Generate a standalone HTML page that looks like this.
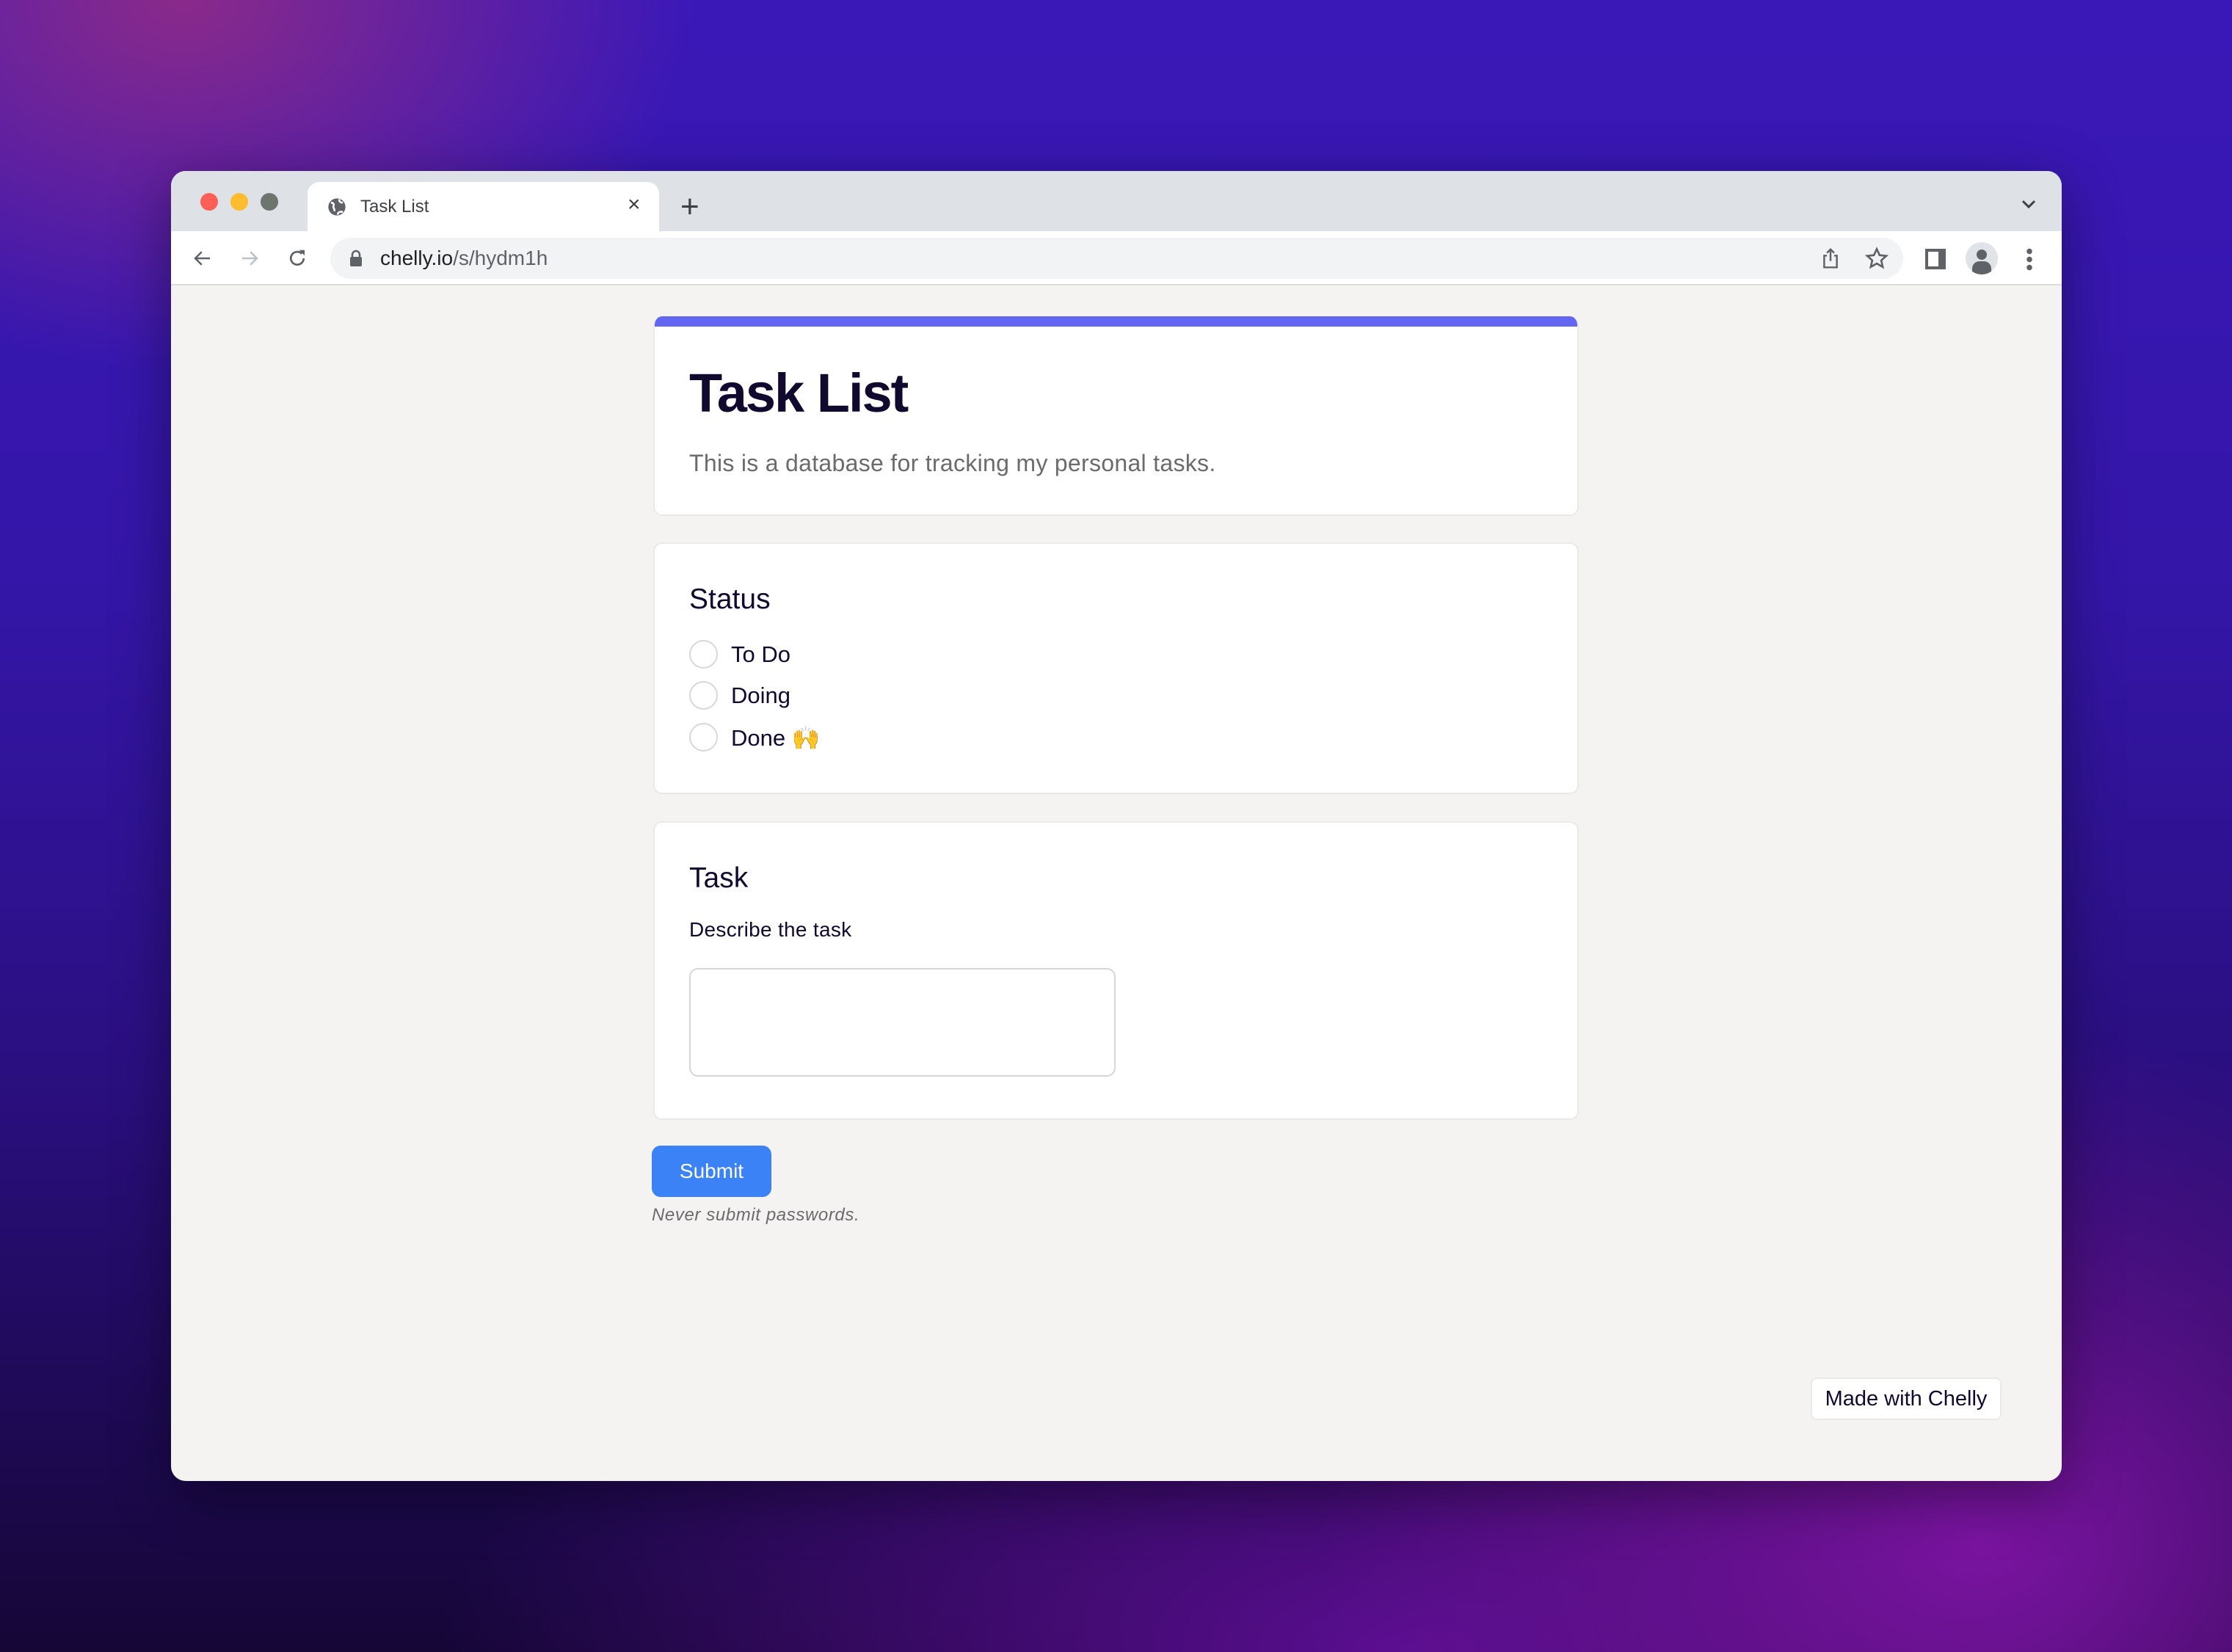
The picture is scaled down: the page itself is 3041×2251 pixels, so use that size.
<!DOCTYPE html>
<html><head><meta charset="utf-8"><style>
*{margin:0;padding:0;box-sizing:border-box}
body{width:3041px;height:2251px;overflow:hidden;position:relative;font-family:"Liberation Sans",sans-serif;
background:
radial-gradient(ellipse 700px 500px at 250px 0px,#8a2a8a 0%,rgba(138,42,138,0) 100%),
radial-gradient(ellipse 900px 700px at 2700px 2100px,#7a14a0 0%,rgba(122,20,160,0) 100%),
radial-gradient(ellipse 1300px 600px at 1900px 2250px,#5a0e90 0%,rgba(90,14,144,0) 100%),
linear-gradient(180deg,#3a18b8 0%,#3416a8 35%,#2a0f80 65%,#150636 100%);}
.win{position:absolute;left:233px;top:233px;width:2576px;height:1785px;border-radius:20px;overflow:hidden;background:#f4f3f2;box-shadow:0 20px 80px rgba(0,0,0,.4)}
.tabs{position:absolute;left:0;top:0;width:100%;height:82px;background:#dee1e6}
.dot{position:absolute;top:30px;width:24px;height:24px;border-radius:50%}
.tab{position:absolute;left:186px;top:15px;width:479px;height:67px;background:#fff;border-radius:16px 16px 0 0}
.tool{position:absolute;left:0;top:82px;width:100%;height:74px;background:#fff;border-bottom:2px solid #dadce0}
.url{position:absolute;left:217px;top:9px;width:2143px;height:56px;border-radius:28px;background:#f1f3f4}
.card{position:absolute;left:657px;width:1261px;background:#fff;border:2px solid #ebe9e6;border-radius:12px}
.h2{position:absolute;left:47px;font-size:39px;color:#120a2e}
.radio{position:absolute;left:47px;width:39px;height:39px;border:2px solid #d8d8dc;border-radius:50%}
.rl{position:absolute;left:104px;font-size:31px;color:#120a2e}
</style></head><body>
<div class="win">
 <div class="tabs">
  <div class="dot" style="left:40px;background:#fe5f57"></div>
  <div class="dot" style="left:81px;background:#febc2e"></div>
  <div class="dot" style="left:122px;background:#6e756f"></div>
  <div class="tab">
   <svg style="position:absolute;left:26px;top:20px" width="28" height="28" viewBox="0 0 24 24"><circle cx="12" cy="12" r="10" fill="#5f6368"/><path d="M5 7c3 0 4 2 3 4s2 3 1 6M15 3c-1 3 2 4 4 4M13 21c0-3 3-4 6-3" stroke="#fff" stroke-width="2.2" fill="none"/></svg>
   <div style="position:absolute;left:72px;top:20px;font-size:24px;color:#3c4043">Task List</div>
   <div style="position:absolute;left:436px;top:14px;font-size:30px;color:#3c4043">×</div>
  </div>
  <div style="position:absolute;left:694px;top:24px;font-size:44px;color:#3c4043;font-weight:300">+</div>
  <svg style="position:absolute;left:2520px;top:38px" width="22" height="14" viewBox="0 0 22 14"><path d="M3 3l8 8 8-8" stroke="#3c4043" stroke-width="3" fill="none"/></svg>
 </div>
 <div class="tool">
  <svg style="position:absolute;left:28px;top:22px" width="30" height="30" viewBox="0 0 24 24"><path d="M20 12H5M11 5l-7 7 7 7" stroke="#5f6368" stroke-width="2" fill="none"/></svg>
  <svg style="position:absolute;left:92px;top:22px" width="30" height="30" viewBox="0 0 24 24"><path d="M4 12h15M13 5l7 7-7 7" stroke="#bdc1c6" stroke-width="2" fill="none"/></svg>
  <svg style="position:absolute;left:157px;top:22px" width="30" height="30" viewBox="0 0 24 24"><path d="M19 12a7 7 0 1 1-2-5" stroke="#5f6368" stroke-width="2.2" fill="none"/><path d="M14 3h6v6z" fill="#5f6368"/></svg>
  <div class="url">
   <svg style="position:absolute;left:26px;top:16px" width="18" height="24" viewBox="0 0 18 24"><rect x="1" y="10" width="16" height="13" rx="2" fill="#5f6368"/><path d="M4 11V7a5 5 0 0 1 10 0v4" stroke="#5f6368" stroke-width="2.5" fill="none"/></svg>
   <div style="position:absolute;left:68px;top:12px;font-size:28px;color:#202124">chelly.io<span style="color:#5f6368">/s/hydm1h</span></div>
   <svg style="position:absolute;left:2029px;top:12px" width="30" height="32" viewBox="0 0 24 26"><path d="M8 10H5v13h14V10h-3M12 16V3M8 7l4-4 4 4" stroke="#5f6368" stroke-width="2" fill="none"/></svg>
   <svg style="position:absolute;left:2091px;top:12px" width="32" height="32" viewBox="0 0 24 24"><path d="M12 2.5l2.9 6.3 6.8.7-5.1 4.6 1.5 6.7L12 17.3l-6.1 3.5 1.5-6.7L2.3 9.5l6.8-.7z" stroke="#5f6368" stroke-width="2" fill="none"/></svg>
  </div>
  <div style="position:absolute;left:2390px;top:24px;width:28px;height:28px;border:4px solid #5f6368;border-left-width:4px;border-right-width:10px;background:#fff"></div>
  <div style="position:absolute;left:2445px;top:15px;width:44px;height:44px;border-radius:50%;background:#e0e3e7;overflow:hidden">
   <div style="position:absolute;left:15px;top:10px;width:14px;height:14px;border-radius:50%;background:#5f6368"></div>
   <div style="position:absolute;left:9px;top:26px;width:26px;height:20px;border-radius:10px 10px 0 0;background:#5f6368"></div>
  </div>
  <div style="position:absolute;left:2528px;top:22px;width:8px;height:32px;background:radial-gradient(circle,#5f6368 3.5px,transparent 4px) 0 0/8px 11px repeat-y"></div>
 </div>
 <!-- page -->
 <div class="card" style="top:198px;height:272px;border-top:none;overflow:hidden">
  <div style="height:14px;background:#6366f1;margin:0 -2px"></div>
  <div style="position:absolute;left:47px;top:62px;font-size:74px;font-weight:bold;color:#120a2e;letter-spacing:-2px">Task List</div>
  <div style="position:absolute;left:47px;top:182px;font-size:32px;color:#6b6b6b;letter-spacing:0.3px">This is a database for tracking my personal tasks.</div>
 </div>
 <div class="card" style="top:506px;height:343px">
  <div class="h2" style="top:54px">Status</div>
  <div class="radio" style="top:131px"></div><div class="rl" style="top:133px">To Do</div>
  <div class="radio" style="top:187px"></div><div class="rl" style="top:189px">Doing</div>
  <div class="radio" style="top:244px"></div><div class="rl" style="top:246px">Done <span style="color:#f5b82e">🙌</span></div>
 </div>
 <div class="card" style="top:886px;height:407px">
  <div class="h2" style="top:54px">Task</div>
  <div style="position:absolute;left:47px;top:130px;font-size:28px;color:#120a2e;letter-spacing:0.3px">Describe the task</div>
  <div style="position:absolute;left:47px;top:198px;width:581px;height:148px;border:2px solid #d6d6da;border-radius:12px"></div>
 </div>
 <div style="position:absolute;left:655px;top:1328px;width:163px;height:70px;border-radius:12px;background:#3b82f6;color:#fff;font-size:28px;text-align:center;line-height:70px">Submit</div>
 <div style="position:absolute;left:655px;top:1409px;font-size:24px;font-style:italic;color:#6b6b6b;letter-spacing:0.6px">Never submit passwords.</div>
 <div style="position:absolute;left:2234px;top:1644px;width:260px;height:58px;border-radius:8px;background:#fff;border:2px solid #ebe9e6;font-size:29px;color:#120a2e;text-align:center;line-height:54px">Made with Chelly</div>
</div>
</body></html>
